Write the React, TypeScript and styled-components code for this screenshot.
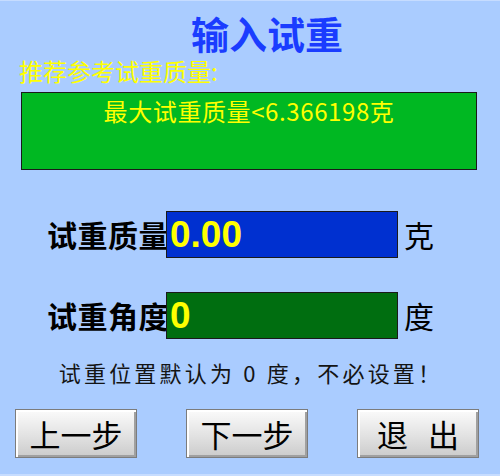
import React from "react";
import styled, { createGlobalStyle } from "styled-components";

const GlobalStyle = createGlobalStyle`
  html, body {
    margin: 0;
    padding: 0;
    background: #aaccff;
  }
  * {
    box-sizing: border-box;
  }
`;

const cjk = `"Noto Sans CJK SC", "Liberation Sans", sans-serif`;

const Page = styled.div`
  width: 500px;
  height: 476px;
  background: #aaccff;
  border-top: 1px solid #c6dcff;
  border-bottom: 2px solid #c6dcff;
  display: flex;
  flex-direction: column;
  font-family: ${cjk};
  overflow: hidden;
`;

const Title = styled.h1`
  margin: 0;
  padding: 11px 0 0 34px;
  text-align: center;
  font-size: 38px;
  line-height: 42px;
  font-weight: 700;
  color: #1a3cff;
`;

const Hint = styled.div`
  margin-top: 3px;
  padding-left: 19px;
  font-size: 24px;
  line-height: 28px;
  color: #ffff00;
`;

const Suggest = styled.div`
  margin: 7px 0 0 21px;
  width: 456px;
  height: 78px;
  border: 1px solid #1a1a1a;
  background: #00b822;
  padding-top: 4px;
  text-align: center;
  font-size: 24px;
  line-height: 28px;
  letter-spacing: 0.6px;
  color: #ffff00;
`;

const Row = styled.div<{ $top: number }>`
  margin-top: ${(p) => p.$top}px;
  display: flex;
  align-items: center;
  height: 47px;
`;

const Label = styled.div`
  width: 169px;
  margin-right: -3px;
  text-align: right;
  font-size: 30px;
  line-height: 47px;
  letter-spacing: 0.5px;
  font-weight: 700;
  color: #000;
  white-space: nowrap;
`;

const Field = styled.div<{ $bg: string }>`
  width: 232px;
  height: 47px;
  border: 1px solid #1a1a1a;
  background: ${(p) => p.$bg};
  padding-left: 3px;
  font-family: "Liberation Sans", Arial, sans-serif;
  font-weight: 700;
  font-size: 37px;
  line-height: 45px;
  color: #ffff00;
`;

const Unit = styled.div`
  margin-left: 6px;
  font-size: 30px;
  line-height: 47px;
  color: #000;
`;

const Note = styled.div`
  margin-top: 19px;
  padding-left: 2px;
  text-align: center;
  font-size: 22px;
  line-height: 28px;
  letter-spacing: 3.2px;
  color: #141414;
`;

const Buttons = styled.div`
  margin: 23px 0 0 15px;
  display: flex;
  gap: 49px;
`;

const Button = styled.button`
  width: 122px;
  height: 49px;
  padding: 0;
  border: 1px solid #7c7c7c;
  background: linear-gradient(#fbfbfb, #e2e2e2 55%, #cbcbcb);
  box-shadow: inset 2px 2px 0 #ffffff, inset -2px -2px 0 #a0a0a0;
  font-family: ${cjk};
  font-size: 31px;
  line-height: 47px;
  word-spacing: 13px;
  color: #000;
  white-space: pre;
  cursor: pointer;
`;

export default function App() {
  return (
    <>
      <GlobalStyle />
      <Page>
        <Title>输入试重</Title>
        <Hint>推荐参考试重质量:</Hint>
        <Suggest>最大试重质量&lt;6.366198克</Suggest>
        <Row $top={41}>
          <Label>试重质量</Label>
          <Field $bg="#0030d0">0.00</Field>
          <Unit>克</Unit>
        </Row>
        <Row $top={34}>
          <Label>试重角度</Label>
          <Field $bg="#006e10">0</Field>
          <Unit>度</Unit>
        </Row>
        <Note>试重位置默认为 0 度，不必设置！</Note>
        <Buttons>
          <Button>上一步</Button>
          <Button>下一步</Button>
          <Button>{"退 出"}</Button>
        </Buttons>
      </Page>
    </>
  );
}
